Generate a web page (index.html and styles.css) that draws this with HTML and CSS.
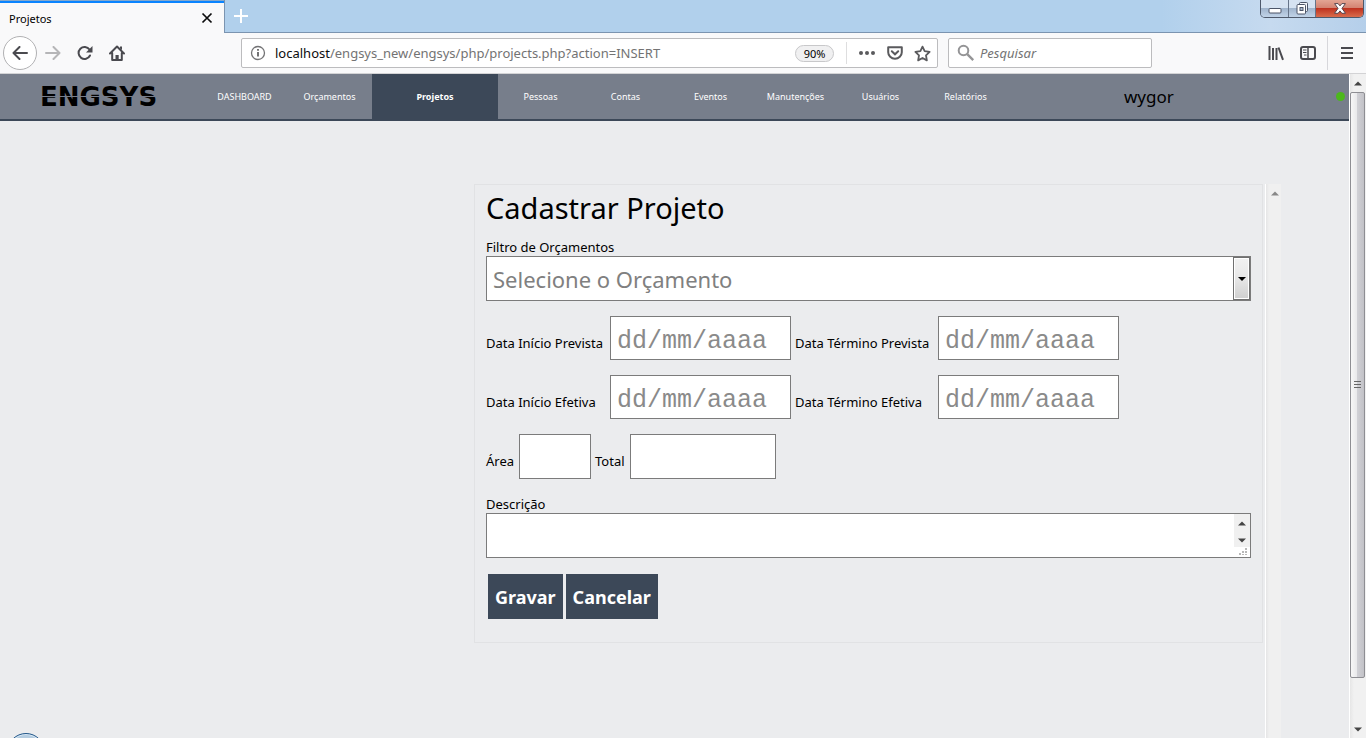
FILE: index.html
```html
<!DOCTYPE html>
<html lang="pt-BR">
<head>
<meta charset="utf-8">
<title>Projetos</title>
<link rel="stylesheet" href="styles.css">
</head>
<body>
<header class="tabstrip">
  <div class="tab">
    <span class="tab-title">Projetos</span>
    <button class="icon-btn" aria-label="Fechar aba"><svg width="12" height="12" viewBox="0 0 12 12"><path d="M1.5 1.500l9 9M10.500 1.500l-9 9" stroke="#0c0c0d" stroke-width="1.700"/></svg></button>
  </div>
  <button class="icon-btn new-tab" aria-label="Nova aba"><svg width="14" height="14" viewBox="0 0 14 14"><path d="M7 0v14M0 7h14" stroke="#fff" stroke-width="2"/></svg></button>
  <div class="window-controls">
    <button class="win-btn win-min" aria-label="Minimizar"><svg width="14" height="7" viewBox="0 0 14 7"><rect x="1" y="1.500" width="12" height="4.500" rx="1" fill="#fff" stroke="#4c5568"/></svg></button>
    <button class="win-btn win-max" aria-label="Restaurar"><svg width="13" height="13" viewBox="0 0 13 13"><rect x="3.500" y=".5" width="8" height="9" rx="1" fill="#f4f6fa" stroke="#4c5568"/><rect x="1" y="2.500" width="8.500" height="9.500" rx="1" fill="#fff" stroke="#4c5568"/><rect x="4" y="5.500" width="3" height="3" fill="#a9b8cc" stroke="#4c5568"/></svg></button>
    <button class="win-btn win-close" aria-label="Fechar"><svg width="12" height="11" viewBox="0 0 12 11"><path d="M.6.600h3.500L6 2.900 7.900.600h3.500L8 5.400l3.500 4.900H7.900L6 7.900l-1.900 2.400H.5L4 5.400z" fill="#fff" stroke="#57464f" stroke-width="1"/></svg></button>
  </div>
</header>

<div class="toolbar">
  <div class="nav-buttons">
    <button class="back" aria-label="Voltar"><svg width="16" height="14" viewBox="0 0 16 14"><path d="M15 7H1.800M7.500 1l-6 6 6 6" fill="none" stroke="#4a4a4f" stroke-width="2" stroke-linecap="round" stroke-linejoin="round"/></svg></button>
    <button class="icon-btn" aria-label="Avançar"><svg width="16" height="14" viewBox="0 0 16 14"><path d="M1 7h13.200M8.500 1l6 6-6 6" fill="none" stroke="#b5b5b7" stroke-width="2" stroke-linecap="round" stroke-linejoin="round"/></svg></button>
    <button class="icon-btn" aria-label="Recarregar"><svg width="16" height="16" viewBox="0 0 16 16"><path d="M13 10.500A6 6 0 1 1 12.500 4.500" fill="none" stroke="#4a4a4f" stroke-width="2" stroke-linecap="round"/><path d="M15.500 1v6.500H9z" fill="#4a4a4f"/></svg></button>
    <button class="icon-btn" aria-label="Início"><svg width="16" height="16" viewBox="0 0 16 16"><path d="M1 8.500L8 1.500l7 7M3.200 8v7h9.600V8" fill="none" stroke="#4a4a4f" stroke-width="2" stroke-linecap="round" stroke-linejoin="round"/><path d="M6.500 15v-5h3.200v5M11 1.500h2V5l-2-1.500z" fill="#4a4a4f"/></svg></button>
  </div>
  <div class="urlbar">
    <svg width="16" height="16" viewBox="0 0 16 16"><circle cx="8" cy="8" r="6.500" fill="none" stroke="#737375" stroke-width="1.300"/><path d="M8 7v4.500M8 4v1.700" stroke="#636365" stroke-width="1.800"/></svg>
    <div class="url" role="textbox" aria-label="Endereço"><span class="host">localhost</span>/engsys_new/engsys/php/projects.php?action=INSERT</div>
    <button class="zoom-level">90%</button>
    <div class="url-actions">
      <button class="icon-btn" aria-label="Ações da página"><svg width="18" height="16" viewBox="0 0 18 16"><g fill="#5a5a5d"><circle cx="3" cy="8" r="2"/><circle cx="9" cy="8" r="2"/><circle cx="15" cy="8" r="2"/></g></svg></button>
      <button class="icon-btn" aria-label="Salvar no Pocket"><svg width="16" height="16" viewBox="0 0 16 16"><path d="M1.200 2.200h13.600v5a6.800 6.500 0 0 1-13.600 0z" fill="none" stroke="#5a5a5d" stroke-width="2" stroke-linejoin="round"/><path d="M4.800 6.300L8 9.300l3.200-3" fill="none" stroke="#5a5a5d" stroke-width="2" stroke-linecap="round"/></svg></button>
      <button class="icon-btn" aria-label="Favoritar"><svg width="17" height="17" viewBox="0 0 16 16"><path d="M8 1.500l2 4.300 4.700.6-3.400 3.300.8 4.800L8 12.200l-4.100 2.300.8-4.800L1.300 6.400 6 5.800z" fill="none" stroke="#5a5a5d" stroke-width="1.700" stroke-linejoin="round"/></svg></button>
    </div>
  </div>
  <label class="search">
    <svg width="18" height="18" viewBox="0 0 18 18"><circle cx="6.500" cy="6.500" r="4.800" fill="none" stroke="#949496" stroke-width="2"/><path d="M10.200 10.200l6 6" stroke="#949496" stroke-width="2.400"/></svg>
    <input type="text" placeholder="Pesquisar" aria-label="Pesquisar">
  </label>
  <div class="tools">
    <button class="icon-btn" aria-label="Biblioteca"><svg width="16" height="16" viewBox="0 0 16 16"><path d="M1.500 1v14M5 3v12M8.500 3v12M10.500 2.500L15 14.800" stroke="#4a4a4f" stroke-width="2"/></svg></button>
    <button class="icon-btn" aria-label="Painel lateral"><svg width="16" height="16" viewBox="0 0 16 16"><rect x="1" y="2" width="14" height="12" rx="2" fill="none" stroke="#4a4a4f" stroke-width="2"/><path d="M8 2v12" stroke="#4a4a4f" stroke-width="1.500"/><path d="M3 5h3.500M3 7.500h3.500M4 10h2.500" stroke="#4a4a4f"/></svg></button>
    <button class="icon-btn menu" aria-label="Menu"><svg width="12" height="14" viewBox="0 0 12 14"><path d="M0 2h12M0 7h12M0 12h12" stroke="#4a4a4f" stroke-width="2"/></svg></button>
  </div>
</div>

<div class="viewport">
  <div class="page">
    <div class="navbar">
      <a class="brand" href="#">ENGSYS</a>
      <nav class="menu-links">
        <a href="#">DASHBOARD</a>
        <a href="#">Orçamentos</a>
        <a href="#" class="active">Projetos</a>
        <a href="#">Pessoas</a>
        <a href="#">Contas</a>
        <a href="#">Eventos</a>
        <a href="#">Manutenções</a>
        <a href="#">Usuários</a>
        <a href="#">Relatórios</a>
      </nav>
      <div class="user"><span>wygor</span><span class="online"></span></div>
    </div>
    <main class="content">
      <form class="card">
        <h1>Cadastrar Projeto</h1>
        <label class="block-label" for="orcamento">Filtro de Orçamentos</label>
        <div class="select-wrap">
          <select id="orcamento" class="field"><option>Selecione o Orçamento</option></select>
        </div>
        <div class="dates">
          <label for="inicio-prevista">Data Início Prevista</label>
          <input class="field date" id="inicio-prevista" type="text" placeholder="dd/mm/aaaa">
          <label class="second" for="termino-prevista">Data Término Prevista</label>
          <input class="field date" id="termino-prevista" type="text" placeholder="dd/mm/aaaa">
          <label for="inicio-efetiva">Data Início Efetiva</label>
          <input class="field date" id="inicio-efetiva" type="text" placeholder="dd/mm/aaaa">
          <label class="second" for="termino-efetiva">Data Término Efetiva</label>
          <input class="field date" id="termino-efetiva" type="text" placeholder="dd/mm/aaaa">
        </div>
        <div class="totals">
          <label for="area">Área</label>
          <input class="field" id="area" type="text">
          <label class="second" for="total">Total</label>
          <input class="field" id="total" type="text">
        </div>
        <label class="block-label" for="descricao">Descrição</label>
        <div class="textarea-wrap">
          <textarea id="descricao" class="field" rows="1"></textarea>
          <div class="mini-scroll">
            <svg width="16" height="42" viewBox="0 0 16 42"><path d="M0 0h16v33H0z" fill="#f0f0f0"/><path d="M4 11.500h8L8 7.500zM4 24.500h8l-4 4z" fill="#444"/><path d="M11 34h2v2h-2zM8 37h2v2H8zM11 37h2v2h-2zM5 39h2v2H5zM8 40h2v1H8zM11 40h2v1h-2z" fill="#b8b8b8"/></svg>
          </div>
        </div>
        <div class="actions">
          <button type="button">Gravar</button>
          <button type="button">Cancelar</button>
        </div>
      </form>
      <div class="inner-scroll"><svg width="8" height="5" viewBox="0 0 8 5"><path d="M0 4.500h8l-4-4z" fill="#888"/></svg></div>
    </main>
    <div class="orb"></div>
  </div>
  <div class="page-scroll">
    <span class="arrow"><svg width="8" height="5" viewBox="0 0 8 5"><path d="M0 4.500h8l-4-4z" fill="#444"/></svg></span>
    <div class="thumb"><svg width="7" height="8" viewBox="0 0 7 8"><path d="M0 .5h7M0 3.500h7M0 6.500h7" stroke="#666"/></svg></div>
    <div class="rest"></div>
    <span class="arrow"><svg width="8" height="5" viewBox="0 0 8 5"><path d="M0 .5h8l-4 4z" fill="#444"/></svg></span>
  </div>
</div>
</body>
</html>
```

FILE: styles.css
```css
*, *::before, *::after { box-sizing: border-box; }
html, body { height: 100%; }
body {
  margin: 0;
  display: flex;
  flex-direction: column;
  overflow: hidden;
  font-family: "Noto Sans", "Open Sans", sans-serif;
  font-size: 13px;
  color: #000;
}
button, input, select, textarea { font: inherit; margin: 0; }
svg { display: block; flex: none; }
button { border: 0; padding: 0; background: none; }
.icon-btn { display: flex; align-items: center; justify-content: center; }

/* Browser window */
.tabstrip {
  display: flex;
  height: 33px;
  flex: none;
  border-bottom: 1px solid #7b94b0;
  background: linear-gradient(90deg, #b1d0ec 0, #b1d0ec 85%, #c6daef 93%, #b5cfea 100%);
}
.tab {
  display: flex;
  align-items: center;
  justify-content: space-between;
  width: 225px;
  height: 33px;
  padding: 3px 11px 0 9px;
  border-right: 1px solid #7b94b0;
  background: linear-gradient(#86a9cc 1px, #0a84ff 1px, #0a84ff 3px, #f9f9fa 3px);
  font-size: 11px;
}
.new-tab { width: 32px; }
.window-controls {
  display: flex;
  height: 18px;
  margin: 0 2px 0 auto;
  border: 1px solid #4e596b;
  border-top: 0;
  border-radius: 0 0 5px 5px;
  overflow: hidden;
}
.win-btn {
  display: flex;
  align-items: center;
  justify-content: center;
  width: 27px;
  background: linear-gradient(#d5e2f1 50%, #a1b5cd 50%, #c1d3e8);
  border-right: 1px solid #667489;
}
.win-min { width: 28px; padding-top: 3px; }
.win-close { width: 47px; border: 0; background: linear-gradient(#e3a594, #d48472 45%, #bf3320 50%, #d96c4c); }
.toolbar {
  display: flex;
  align-items: center;
  height: 41px;
  flex: none;
  padding: 0 13px 0 3px;
  border-bottom: 1px solid #d3d3d5;
  background: #f9f9fa;
}
.nav-buttons { display: flex; align-items: center; gap: 16px; width: 238px; }
.nav-buttons .icon-btn:nth-child(2) { margin-left: -8px; }
.back {
  display: flex;
  align-items: center;
  justify-content: center;
  width: 34px;
  height: 34px;
  border: 1px solid #b1b1b3;
  border-radius: 50%;
  background: #fff;
}
.urlbar, .search {
  display: flex;
  align-items: center;
  min-width: 0;
  height: 30px;
  border: 1px solid #bcbcbe;
  border-radius: 2px;
  background: #fff;
}
.urlbar { flex: 1; padding: 0 6px 0 8px; }
.url { flex: 1; margin-left: 9px; color: #737373; white-space: nowrap; }
.host { color: #0c0c0d; }
.zoom-level {
  width: 39px;
  height: 17px;
  border: 1px solid #c8c8ca;
  border-radius: 9px;
  background: #f0f0f1;
  font-size: 11px;
  line-height: 15px;
}
.url-actions {
  display: flex;
  align-items: center;
  gap: 11px;
  height: 22px;
  margin-left: 12px;
  padding-left: 11px;
  border-left: 1px solid #dededf;
}
.search { width: 204px; margin-left: 10px; padding: 0 8px; gap: 5px; }
.search input { flex: 1; min-width: 0; border: 0; padding: 0; background: none; font-style: italic; }
.search input::placeholder { color: #737373; }
.tools { display: flex; align-items: center; gap: 16px; margin-left: 116px; }
.menu { height: 34px; margin-left: -5px; padding-left: 13px; border-left: 1px solid #d7d7db; }

/* Application */
.viewport { display: flex; flex: 1; min-height: 0; background: #ebecee; }
.page { flex: 1; display: flex; flex-direction: column; position: relative; min-width: 0; }
.navbar {
  display: flex;
  height: 47px;
  flex: none;
  background: #777e8b;
  border-bottom: 2px solid #3c4858;
}
.brand {
  position: relative;
  width: 202px;
  padding-left: 40px;
  color: #000;
  font: bold 26px/46px "DejaVu Sans", sans-serif;
  text-decoration: none;
}
.brand::after {
  content: "";
  position: absolute;
  left: 40px;
  top: 22px;
  width: 120px;
  height: 1px;
  background: #777e8b;
}
.menu-links { display: flex; }
.menu-links a {
  width: 85px;
  color: #fff;
  font-size: 9px;
  line-height: 46px;
  text-align: center;
  text-decoration: none;
}
.menu-links .active { width: 126px; background: #3c4858; font-weight: bold; }
.user {
  display: flex;
  align-items: center;
  justify-content: space-between;
  flex: 1;
  padding: 0 4px 0 116px;
  font-size: 17px;
}
.online { width: 9px; height: 9px; border-radius: 50%; background: #4cb81c; }
.content { display: flex; flex: 1; min-height: 0; padding: 63px 68px 0 474px; }
.card {
  flex: 1;
  align-self: flex-start;
  min-width: 0;
  padding: 4px 11px 23px;
  border: 1px solid #e1e2e4;
}
h1 { margin: 0; font-size: 29px; font-weight: normal; line-height: 38px; }
.block-label { display: block; line-height: 18px; }
h1 + .block-label { margin-top: 11px; }
.field {
  height: 45px;
  padding: 0 6px;
  border: 1px solid #7b7b7b;
  border-radius: 0;
  background: #fff;
  color: #808080;
  font-size: 22px;
}
.select-wrap, .textarea-wrap { position: relative; }
.select-wrap .field { display: block; width: 100%; appearance: none; }
.select-wrap::before {
  content: "";
  position: absolute;
  top: 1px;
  right: 1px;
  width: 17px;
  height: 43px;
  border: 1px solid #707070;
  background: linear-gradient(#f2f2f2, #e7e7e7 50%, #cfcfcf);
  box-shadow: inset 0 0 0 1px #fff;
}
.select-wrap::after {
  content: "";
  position: absolute;
  top: 21px;
  right: 5px;
  border: 4px solid transparent;
  border-top-color: #000;
  border-bottom: 0;
}
.dates {
  display: grid;
  grid-template-columns: 124px 181px 147px 181px;
  align-items: baseline;
  row-gap: 15px;
  margin-top: 15px;
}
.second { padding-left: 4px; }
.date { min-width: 0; height: 44px; padding-top: 6px; font-family: "Liberation Mono", monospace; font-size: 25px; }
.date::placeholder { color: #8a8a8a; }
.totals {
  display: grid;
  grid-template-columns: 33px 72px 39px 146px;
  align-items: baseline;
  margin: 15px 0 16px;
}
.totals .field { min-width: 0; }
.textarea-wrap .field { display: block; width: 100%; overflow: hidden; resize: none; }
.mini-scroll { position: absolute; top: 1px; right: 1px; }
.actions { display: flex; gap: 3px; margin: 16px 2px 0; }
.actions button {
  height: 45px;
  padding: 0 7px;
  background: #3c4858;
  color: #fff;
  font-size: 18px;
  font-weight: bold;
}
.inner-scroll {
  width: 16px;
  margin-left: 2px;
  padding: 7px 0 0 5px;
  border-left: 1px solid #fff;
  background: linear-gradient(90deg, #e5e5e6, #f0f0f0 3px);
}
.page-scroll {
  display: flex;
  flex-direction: column;
  width: 17px;
  background: linear-gradient(90deg, #fff 1px, #e6e6e6 1px, #f1f1f1 5px);
}
.arrow { display: flex; align-items: center; justify-content: center; height: 18px; }
.thumb {
  display: flex;
  align-items: center;
  justify-content: center;
  flex: 586 1 0;
  margin: 0 1px;
  border: 1px solid #8e8e93;
  border-radius: 2px;
  background: linear-gradient(90deg, #f7f7f7, #e9e9eb 45%, #d0d0d5 50%, #c2c2c7);
}
.rest { flex: 42 1 0; }
.orb {
  position: absolute;
  left: 7px;
  bottom: -33px;
  width: 38px;
  height: 38px;
  border: 1px solid #23588a;
  border-radius: 50%;
  background: #b4cce0;
  box-shadow: inset 0 0 0 1px #dcebf7;
}
```
